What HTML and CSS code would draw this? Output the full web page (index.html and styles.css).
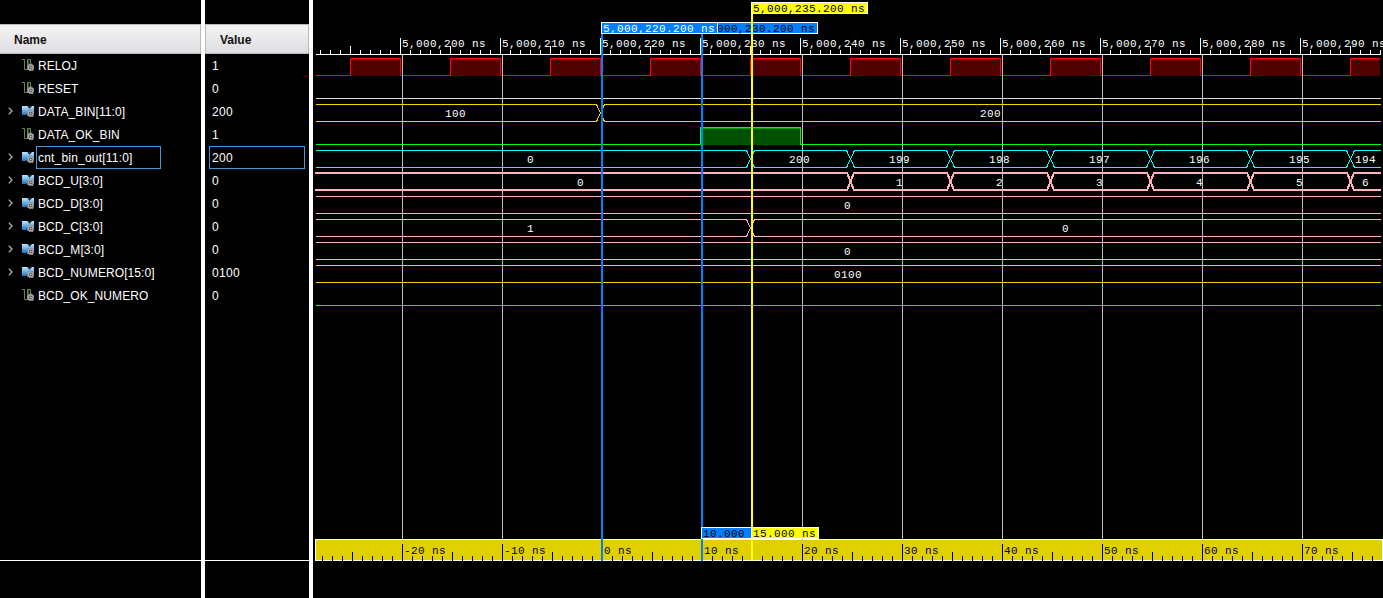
FILE: index.html
```html
<!DOCTYPE html>
<html lang="en">
<head>
<meta charset="utf-8">
<title>Waveform</title>
<link rel="stylesheet" href="styles.css">
</head>
<body>
<svg class="defs" width="0" height="0">
  <defs>
    <linearGradient id="busfill" x1="0" y1="0" x2="0" y2="1"><stop offset="0" stop-color="#c4e4f8"/><stop offset=".45" stop-color="#6fb8ea"/><stop offset="1" stop-color="#1673bb"/></linearGradient>
    <symbol id="gear" viewBox="0 0 12 12">
      <circle cx="8.7" cy="8.5" r="2.5" fill="#555" stroke="#a8a8a8" stroke-width="1.5"/>
      <circle cx="8.7" cy="8.5" r="3.4" fill="none" stroke="#8f8f8f" stroke-width="1.2" stroke-dasharray="1.4 1.27"/>
      <circle cx="8.7" cy="8.5" r=".8" fill="#ddd"/>
    </symbol>
    <symbol id="wire" viewBox="0 0 12 12">
      <path d="M0 .5H2.5V10.5H5.5V.5H8.5V6" fill="none" stroke="#628a4a"/>
      <path d="M6.5 1V6" stroke="#3b4736"/>
      <use href="#gear"/>
    </symbol>
    <symbol id="bus" viewBox="0 0 12 12">
      <path d="M0 1H5.5L7.5 3.4L9.8 1H12V8H7L5.5 9L4 10H0Z" fill="url(#busfill)"/>
      <path d="M5.5 1H9.8L7.5 3.8Z" fill="#122c40"/>
      <use href="#gear"/>
    </symbol>
    <symbol id="chev" viewBox="0 0 5 8"><path d="M.8 .6L4 4L.8 7.4" fill="none" stroke="#b4b4b4" stroke-width="1.3"/></symbol>
  </defs>
</svg>
<main class="viewer">
  <section class="column names">
    <h2 class="head">Name</h2>
    <ul class="rows">
      <li class="row"><span class="exp"></span><svg class="icon"><use href="#wire"/></svg><span class="label">RELOJ</span></li>
      <li class="row"><span class="exp"></span><svg class="icon"><use href="#wire"/></svg><span class="label">RESET</span></li>
      <li class="row"><svg class="exp"><use href="#chev"/></svg><svg class="icon"><use href="#bus"/></svg><span class="label">DATA_BIN[11:0]</span></li>
      <li class="row"><span class="exp"></span><svg class="icon"><use href="#wire"/></svg><span class="label">DATA_OK_BIN</span></li>
      <li class="row"><svg class="exp"><use href="#chev"/></svg><svg class="icon"><use href="#bus"/></svg><span class="label selected">cnt_bin_out[11:0]</span></li>
      <li class="row"><svg class="exp"><use href="#chev"/></svg><svg class="icon"><use href="#bus"/></svg><span class="label">BCD_U[3:0]</span></li>
      <li class="row"><svg class="exp"><use href="#chev"/></svg><svg class="icon"><use href="#bus"/></svg><span class="label">BCD_D[3:0]</span></li>
      <li class="row"><svg class="exp"><use href="#chev"/></svg><svg class="icon"><use href="#bus"/></svg><span class="label">BCD_C[3:0]</span></li>
      <li class="row"><svg class="exp"><use href="#chev"/></svg><svg class="icon"><use href="#bus"/></svg><span class="label">BCD_M[3:0]</span></li>
      <li class="row"><svg class="exp"><use href="#chev"/></svg><svg class="icon"><use href="#bus"/></svg><span class="label">BCD_NUMERO[15:0]</span></li>
      <li class="row"><span class="exp"></span><svg class="icon"><use href="#wire"/></svg><span class="label">BCD_OK_NUMERO</span></li>
    </ul>
    <div class="foot"></div>
  </section>
  <section class="column values">
    <h2 class="head">Value</h2>
    <ul class="rows">
      <li class="row"><span class="label">1</span></li>
      <li class="row"><span class="label">0</span></li>
      <li class="row"><span class="label">200</span></li>
      <li class="row"><span class="label">1</span></li>
      <li class="row"><span class="label selected">200</span></li>
      <li class="row"><span class="label">0</span></li>
      <li class="row"><span class="label">0</span></li>
      <li class="row"><span class="label">0</span></li>
      <li class="row"><span class="label">0</span></li>
      <li class="row"><span class="label">0100</span></li>
      <li class="row"><span class="label">0</span></li>
    </ul>
    <div class="foot"></div>
  </section>
  <svg class="waves" viewBox="313 0 1070 598" width="1070" height="598">
    <!-- time ruler -->
    <g class="ruler">
      <path d="M316 54.5H1381"/>
      <path class="t4" d="M320 52H1381"/>
      <path class="t8" d="M350 50H1381"/>
      <path class="t16" d="M400 46H1381"/>
    </g>
    <g class="time light">
      <text x="402" y="47">5,000,200 ns</text><text x="502" y="47">5,000,210 ns</text><text x="602" y="47">5,000,220 ns</text><text x="702" y="47">5,000,230 ns</text><text x="802" y="47">5,000,240 ns</text><text x="902" y="47">5,000,250 ns</text><text x="1002" y="47">5,000,260 ns</text><text x="1102" y="47">5,000,270 ns</text><text x="1202" y="47">5,000,280 ns</text><text x="1302" y="47">5,000,290 ns</text>
    </g>

    <!-- signals -->
    <path class="clockfill" d="M351 67.5H1380"/>
    <path class="clocktop" d="M351 59.5H1380"/>
    <path class="sig red" d="M316 75.5H350.5V58.5H400.5V75.5H450.5V58.5H500.5V75.5H550.5V58.5H600.5V75.5H650.5V58.5H700.5V75.5H750.5V58.5H800.5V75.5H850.5V58.5H900.5V75.5H950.5V58.5H1000.5V75.5H1050.5V58.5H1100.5V75.5H1150.5V58.5H1200.5V75.5H1250.5V58.5H1300.5V75.5H1350.5V58.5H1381"/>
    <path class="sig grey" d="M316 98.5H1381"/>
    <path class="sig gold" d="M316 104.5H596.5L604.5 121.5H1381M316 121.5H596.5L604.5 104.5H1381"/>
    <rect class="okfill" x="701" y="128" width="99" height="17"/>
    <path class="oktop" d="M701 128.5H800"/>
    <path class="sig green" d="M316 144.5H700.5V127.5H800.5V144.5H1381M316 305.5H1381"/>
    <path class="sig cyan" d="M316 150.5H746.5L754.5 167.5H846.5L854.5 150.5H946.5L954.5 167.5H1046.5L1054.5 150.5H1146.5L1154.5 167.5H1246.5L1254.5 150.5H1346.5L1354.5 167.5H1381M316 167.5H746.5L754.5 150.5H846.5L854.5 167.5H946.5L954.5 150.5H1046.5L1054.5 167.5H1146.5L1154.5 150.5H1246.5L1254.5 167.5H1346.5L1354.5 150.5H1381"/>
    <path class="sig pink thick" d="M315 173H847L854 190H947L954 173H1047L1054 190H1147L1154 173H1247L1254 190H1347L1354 173H1381M315 190H847L854 173H947L954 190H1047L1054 173H1147L1154 190H1247L1254 173H1347L1354 190H1381"/>
    <path class="sig pink" d="M316 196.5H1381M316 213.5H1381M316 219.5H746.5L754.5 236.5H1381M316 236.5H746.5L754.5 219.5H1381M316 242.5H1381M316 259.5H1381"/>
    <path class="sig gold" d="M316 265.5H1381M316 282.5H1381"/>
    <g class="val light">
      <text x="445" y="117">100</text><text x="980" y="117">200</text>
      <text x="527" y="163">0</text><text x="789" y="163">200</text><text x="889" y="163">199</text><text x="989" y="163">198</text><text x="1089" y="163">197</text><text x="1189" y="163">196</text><text x="1289" y="163">195</text><text x="1355" y="163">194</text>
      <text x="577" y="186">0</text><text x="896" y="186">1</text><text x="996" y="186">2</text><text x="1096" y="186">3</text><text x="1196" y="186">4</text><text x="1296" y="186">5</text><text x="1362" y="186">6</text>
      <text x="844" y="209">0</text>
      <text x="527" y="232">1</text><text x="1062" y="232">0</text>
      <text x="844" y="255">0</text>
      <text x="834" y="278">0100</text>
    </g>

    <!-- relative ruler -->
    <rect x="315" y="539" width="1068" height="22" fill="#fff"/>
    <rect x="316" y="540" width="1066" height="20" fill="#e0d000"/>
    <g class="ruler dark">
      <path class="t4" d="M322 558.5H1382"/>
      <path class="t8" d="M352 556.5H1382"/>
      <path class="t16" d="M402 552.5H1382"/>
    </g>
    <g class="time">
      <text x="404" y="554">-20 ns</text><text x="504" y="554">-10 ns</text><text x="604" y="554">0 ns</text><text x="704" y="554">10 ns</text><text x="804" y="554">20 ns</text><text x="904" y="554">30 ns</text><text x="1004" y="554">40 ns</text><text x="1104" y="554">50 ns</text><text x="1204" y="554">60 ns</text><text x="1304" y="554">70 ns</text>
    </g>
    <path class="sig grid" d="M402.5 55V544M502.5 55V544M802.5 55V544M902.5 55V544M1002.5 55V544M1102.5 55V544M1202.5 55V544M1302.5 55V544"/>

    <!-- markers and cursor -->
    <g class="flag blue">
      <rect x="701.5" y="22.5" width="116" height="11"/><text x="703" y="32">5,000,230.200 ns</text>
      <rect x="601.5" y="22.5" width="116" height="11"/><text class="white" x="603" y="32">5,000,220.200 ns</text>
      <path d="M602 34V561M702 34V561"/>
      <rect x="701.5" y="527.5" width="66" height="11"/><text x="703" y="537">10.000</text>
    </g>
    <g class="flag yellow">
      <path d="M752 14V561"/>
      <rect x="751.5" y="2.5" width="116" height="11"/><text x="753" y="12">5,000,235.200 ns</text>
      <rect x="751.5" y="527.5" width="67" height="11"/><text x="753" y="537">15.000 ns</text>
    </g>
  </svg>
</main>
</body>
</html>
```

FILE: styles.css
```css
* { box-sizing: border-box; }
body {
  margin: 0;
  background: #000;
  overflow: hidden;
  font: 12px "Liberation Sans", Arial, sans-serif;
}
.defs { position: absolute; }
.viewer { display: flex; height: 598px; }
.column {
  display: flex;
  flex-direction: column;
  padding-top: 24px;
  border-right: 4px solid #fff;
  color: #fff;
}
.names { width: 205px; }
.values { width: 108px; }
.head {
  margin: 0;
  height: 30px;
  padding-left: 14px;
  border: 1px solid #b9b9bb;
  border-left: 0;
  background: linear-gradient(#f4f4f4, #dedee2);
  color: #111;
  font-size: 12px;
  font-weight: bold;
  line-height: 30px;
}
.values .head { border-left: 1px solid #b9b9bb; }
.rows {
  list-style: none;
  margin: 0;
  padding: 0;
  height: 506px;
}
.row {
  display: flex;
  align-items: center;
  height: 23px;
  padding-left: 8px;
}
.exp { width: 5px; height: 8px; margin: 0 9px 1px 0; flex: none; }
.icon { width: 12px; height: 12px; flex: none; margin: 0 2px 1px 0; }
.label {
  height: 23px;
  line-height: 23px;
  padding-left: 1px;
  border: 1px solid transparent;
  letter-spacing: 0.08px;
  white-space: nowrap;
}
.names .selected { width: 125px; letter-spacing: 0.2px; }
.values .row { padding-left: 4px; }
.values .label { padding-left: 2px; letter-spacing: 0.3px; }
.values .selected { width: 96px; }
.label.selected { border-color: #4496d6; }
.foot { height: 38px; border-top: 1px solid #fff; }

.waves { flex: none; display: block; shape-rendering: crispEdges; }
.waves text {
  font-family: "Liberation Mono", "Courier New", monospace;
  font-size: 11px;
  letter-spacing: 0.4px;
  fill: #000;
  white-space: pre;
}
.waves .light text, .waves text.white { fill: #fff; }
.ruler path { fill: none; stroke: #fff; }
.ruler.dark path { stroke: #000; }
.ruler .t4 { stroke-width: 4px; stroke-dasharray: 1 9; }
.ruler .t8 { stroke-width: 8px; stroke-dasharray: 1 99; }
.ruler .t16 { stroke-width: 16px; stroke-dasharray: 1 99; }
.ruler.dark .t4 { stroke-width: 5px; }
.ruler.dark .t8 { stroke-width: 9px; }
.ruler.dark .t16 { stroke-width: 17px; }
.sig { fill: none; stroke-width: 1px; }
.red { stroke: #f00; }
.grey { stroke: #dcdcdc; }
.gold { stroke: #ffd000; }
.green { stroke: #0f0; }
.cyan { stroke: #0ff; }
.pink { stroke: #ffb0bc; }
.thick { stroke-width: 2px; }
.grid { stroke: #bebebe; }
.clockfill { stroke: #500000; stroke-width: 17px; stroke-dasharray: 49 51; }
.clocktop { stroke: #a00000; stroke-width: 1px; stroke-dasharray: 49 51; }
.okfill { fill: #005000; }
.oktop { stroke: #00a000; stroke-width: 1px; }
.flag rect { stroke: #fff; stroke-width: 1px; }
.flag path { fill: none; stroke-width: 2px; }
.flag.blue rect { fill: #0080ff; }
.flag.blue path { stroke: #0080ff; }
.flag.yellow rect { fill: #ff0; }
.flag.yellow path { stroke: #ff0; }
```
